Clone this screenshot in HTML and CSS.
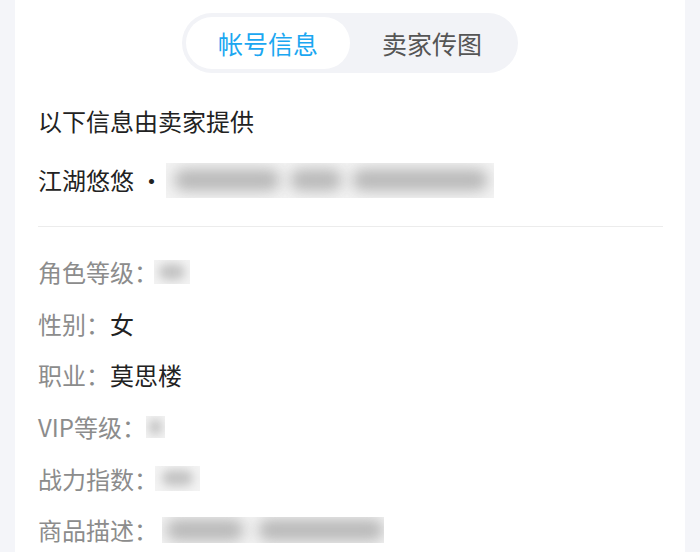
FILE: index.html
```html
<!DOCTYPE html>
<html lang="zh-CN">
<head>
<meta charset="utf-8">
<title>帐号信息</title>
<link rel="stylesheet" href="styles.css">
</head>
<body>
<div class="panel">
  <div class="tabs-wrap">
    <div class="tabs">
      <div class="tab active">帐号信息</div>
      <div class="tab">卖家传图</div>
    </div>
  </div>
  <div class="content">
    <div class="intro">以下信息由卖家提供</div>
    <div class="name-row">江湖悠悠 ·<span class="blur blur-name"><i class="blob b1"></i><i class="blob b2"></i><i class="blob b3"></i></span></div>
    <div class="divider"></div>
    <div class="row"><span class="label">角色等级：</span><span class="blur blur-level"><i class="blob bs"></i></span></div>
    <div class="row"><span class="label">性别：</span><span class="value">女</span></div>
    <div class="row"><span class="label">职业：</span><span class="value">莫思楼</span></div>
    <div class="row"><span class="label">VIP等级：</span><span class="blur blur-vip"><i class="blob bs"></i></span></div>
    <div class="row"><span class="label">战力指数：</span><span class="blur blur-power"><i class="blob bs"></i></span></div>
    <div class="row"><span class="label">商品描述：</span><span class="blur blur-desc"><i class="blob d1"></i><i class="blob d2"></i></span></div>
  </div>
</div>
</body>
</html>
```

FILE: styles.css
```css
html, body {
  margin: 0;
  padding: 0;
  height: 100%;
}
body {
  background: #f4f5f9;
  font-family: "Noto Sans CJK SC", "Noto Sans", sans-serif;
  overflow: hidden;
}
.panel {
  margin: 0 15px;
  height: 100%;
  background: #ffffff;
}
.tabs-wrap {
  display: flex;
  justify-content: center;
  padding-top: 13px;
}
.tabs {
  display: flex;
  width: 336px;
  height: 60px;
  box-sizing: border-box;
  padding: 4px;
  border-radius: 30px;
  background: #f2f3f7;
}
.tab {
  flex: 1;
  display: flex;
  align-items: center;
  justify-content: center;
  font-size: 25px;
  color: #555555;
  border-radius: 26px;
}
.tab.active {
  flex: 0 0 164px;
  background: #ffffff;
  color: #1ba7f1;
}
.content {
  padding: 0 22px 0 23px;
}
.intro {
  margin-top: 22px;
  font-size: 24px;
  line-height: 52px;
  color: #222222;
}
.name-row {
  margin-top: 7px;
  display: flex;
  align-items: center;
  font-size: 24px;
  line-height: 52px;
  color: #222222;
}
.divider {
  margin-top: 20px;
  height: 1px;
  background: #ececec;
}
.row {
  display: flex;
  align-items: center;
  height: 51.6px;
  font-size: 24px;
  color: #222222;
}
.divider + .row {
  margin-top: 19px;
}
.label {
  color: #8c8c8c;
}
.value {
  color: #222222;
}
.blur {
  display: inline-flex;
  align-items: center;
  overflow: hidden;
  background: #f3f3f3;
}
.blob {
  display: block;
  height: 22px;
  background: #b9b9b9;
  filter: blur(7px);
  border-radius: 11px;
}
.blur-name {
  margin-left: 3px;
  width: 328px;
  height: 35px;
  padding-left: 8px;
  gap: 10px;
  box-sizing: border-box;
}
.b1 { width: 106px; }
.b2 { width: 52px; }
.b3 { width: 136px; }
.blur-level {
  margin-left: -4px;
  width: 36px;
  height: 24px;
  justify-content: center;
}
.blur-vip {
  width: 19px;
  height: 22px;
  justify-content: center;
}
.blur-power {
  margin-left: -3px;
  width: 45px;
  height: 25px;
  justify-content: center;
}
.bs {
  width: 70%;
  height: 16px;
  background: #c4c4c4;
  filter: blur(5px);
}
.blur-desc {
  margin-left: 4px;
  width: 222px;
  height: 26px;
  padding-left: 4px;
  gap: 14px;
  box-sizing: border-box;
}
.d1 { width: 80px; }
.d2 { width: 130px; }
```
